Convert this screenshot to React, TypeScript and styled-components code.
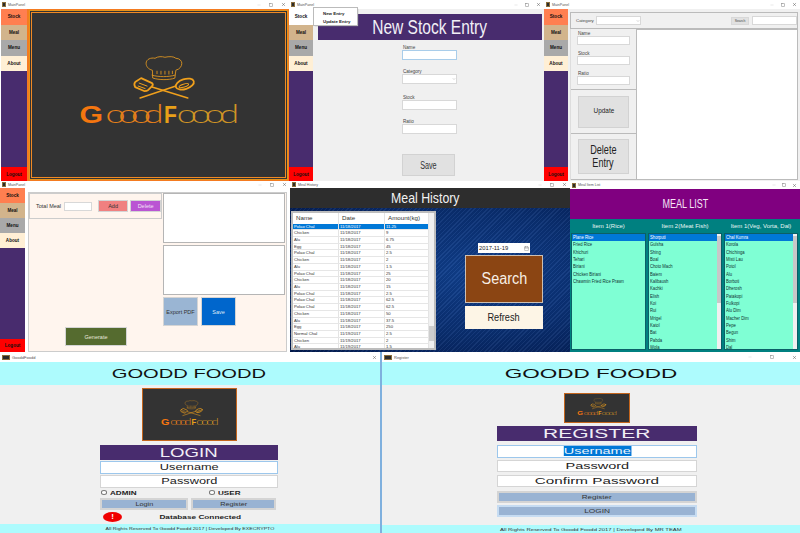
import React from 'react';
import styled, { createGlobalStyle } from 'styled-components';
import { Minus, Square, X, ChevronDown, Calendar } from 'lucide-react';

const Global = createGlobalStyle`
  html, body { margin: 0; padding: 0; background: #fff; overflow: hidden; }
  body { font-family: "Liberation Sans", Arial, sans-serif; color: #222; }
  * { box-sizing: border-box; }
`;

const Collage = styled.div`
  width: 800px; height: 533px; display: grid;
  grid-template-rows: 181px 171px 181px; overflow: hidden;
`;
const Row = styled.div`display: flex; min-width: 0;`;
const Win = styled.section<{ $w: number; $bg?: string; $edge?: string }>`
  width: ${p => p.$w}px; flex: none; height: 100%; display: flex; flex-direction: column;
  background: ${p => p.$bg || '#fff'}; overflow: hidden;
  ${p => p.$edge ? `border-right: 2px solid ${p.$edge};` : ''}
`;
const TitleBar = styled.header<{ $h?: number }>`
  height: ${p => p.$h || 9}px; flex: none; background: #fff; display: flex; align-items: center;
  padding: 0 3px 0 2px; gap: 2px; color: #555;
`;
const TitleIcon = styled.i<{ $w?: number }>`
  display: block; width: ${p => p.$w || 4}px; height: 5px; background: #2b2b2b; border: 1px solid #8a6d3b;
`;
const TitleText = styled.span<{ $s?: number }>`font-size: ${p => p.$s || 3.6}px; color: #555; flex: 1; white-space: nowrap;`;
const Controls = styled.div<{ $gap?: number }>`display: flex; gap: ${p => p.$gap || 8}px; align-items: center; color: #444;`;

function Title({ name, gap, h, iw, s, only }: { name: string; gap?: number; h?: number; iw?: number; s?: number; only?: boolean }) {
  return (
    <TitleBar $h={h}>
      <TitleIcon $w={iw} />
      <TitleText $s={s}>{name}</TitleText>
      <Controls $gap={gap}>
        {!only && <Minus size={4} color="#bbb" />}
        {!only && <Square size={4} />}
        <X size={5} />
      </Controls>
    </TitleBar>
  );
}

const Frame = styled.div`flex: 1; display: flex; min-height: 0;`;
const Side = styled.nav<{ $w: number; $pad?: number }>`
  width: ${p => p.$w}px; flex: none; display: flex; flex-direction: column;
  margin-left: ${p => p.$pad || 0}px;
`;
const NavItem = styled.div<{ $bg: string; $h: number }>`
  height: ${p => p.$h}px; flex: none; background: ${p => p.$bg}; display: flex; align-items: center; justify-content: center;
  font-size: 4.6px; font-weight: 700; color: #111;
`;
const NavFill = styled.div`flex: 1; background: #482c6e;`;

function Sidebar({ w, pad, stock = '#ff7f50', h = 15.5, logout = 14 }: { w: number; pad?: number; stock?: string; h?: number; logout?: number }) {
  return (
    <Side $w={w} $pad={pad}>
      <NavItem $bg={stock} $h={h}>Stock</NavItem>
      <NavItem $bg="#d2b48c" $h={h}>Meal</NavItem>
      <NavItem $bg="#a9a9a9" $h={h}>Menu</NavItem>
      <NavItem $bg="#ffefd5" $h={h}>About</NavItem>
      <NavFill />
      <NavItem $bg="#ff0000" $h={logout}>Logout</NavItem>
    </Side>
  );
}

/* logo */
const LogoSvg = styled.svg`display: block; width: 100%; height: 100%;`;
const ringFont = 'Lato, "Liberation Sans", sans-serif';
function Logo() {
  return (
    <LogoSvg viewBox="29 10 259 170" preserveAspectRatio="xMidYMid slice">
      <g fill="none" stroke="#dc9421" strokeWidth="0.9" strokeLinecap="round" strokeLinejoin="round">
        <path d="M152 70c-4-1-6-4-6-7 0-4 5-6 9-5 3-2 7-2 10-1 4-1 9-1 11 1 4 0 6 3 6 5 0 3-2 6-6 7l-1 8c-6 2-16 2-22 0z" />
        <path d="M152 75c6 2 17 2 23 0M157 71v2.5M161 71v3M165 71v3M169 71v3M172.500 71v2.500" />
      </g>
      <g stroke="#f0a01c" fill="none" strokeLinecap="round" strokeLinejoin="round">
        <path d="M140 98l36-12" strokeWidth="1.500" />
        <path d="M188 98l-36-11" strokeWidth="1.500" />
        <path d="M135 82l6-4 11 5c1 1 1 2 0 3l-4 4c-1 1-3 1-4 1l-9-4c-1-2-1-4 0-5z" strokeWidth="1.800" />
        <path d="M139 83l8 3M138 86l7 2.500" strokeWidth="1" />
        <ellipse cx="185" cy="84" rx="9.500" ry="5" transform="rotate(-18 185 84)" strokeWidth="1.800" />
        <ellipse cx="184" cy="85.500" rx="5" ry="1.500" transform="rotate(-18 184 85.500)" strokeWidth="1" />
      </g>
      <text transform="translate(79 123) scale(1.22 1)" fontFamily="Liberation Sans, sans-serif" fontSize="25" fontWeight="700" fill="#f5760f">G</text>
      <text transform="translate(105 123) scale(1.4 1)" fontFamily={ringFont} fontWeight="300" fontSize="26" fill="#e4801a" x="0 9.200 18.400 27.600">oood</text>
      <text transform="translate(164 123) scale(.85 1)" fontFamily="Liberation Sans, sans-serif" fontSize="25" fontWeight="700" fill="#e8a018">F</text>
      <text transform="translate(177 123) scale(1.4 1)" fontFamily={ringFont} fontWeight="300" fontSize="26" fill="#cf9425" x="0 10 20 30.500">oood</text>
    </LogoSvg>
  );
}

/* Window 1 */
const HomeStage = styled.div`flex: 1; display: flex; background: #f47b20; padding: 1px 1px 1px 2px; min-width: 0;`;
const HomePanel = styled.div`
  flex: 1; background: #333; border: 1px solid #e8941a; outline: 1px solid #f08a24; outline-offset: -3px; overflow: hidden;
`;

/* Window 2 */
const Workspace = styled.main<{ $bg?: string }>`flex: 1; min-width: 0; background: ${p => p.$bg || '#f0f0f0'}; position: relative; display: flex; flex-direction: column;`;
const Banner = styled.div`
  height: 26px; margin: 5px 2px 0 5px; background: #482c6e; color: #f2f0f6; display: flex; align-items: center; justify-content: center;
  font-size: 21px; flex: none;
`;
const Squeeze = styled.span<{ $x: number; $left?: boolean }>`
  display: inline-block; white-space: nowrap; transform: scaleX(${p => p.$x});
  ${p => p.$left ? 'transform-origin: left center;' : ''}
`;
const EntryForm = styled.form`width: 55px; margin: 5px 0 0 89px; display: flex; flex-direction: column;`;
const FieldLabel = styled.label`display: block; font-size: 4.600px; color: #444; height: 5px; line-height: 5px; margin-left: 1px;`;
const Box = styled.div<{ $h?: number; $focus?: boolean; $mb?: number; $w?: number; $ml?: number }>`
  height: ${p => p.$h || 10}px; ${p => p.$w ? `width: ${p.$w}px;` : ''} background: #fff; border: 1px solid ${p => p.$focus ? '#a9cdea' : '#d8d8d8'};
  margin-bottom: ${p => p.$mb || 0}px; margin-left: ${p => p.$ml || 0}px; display: flex; align-items: center; justify-content: flex-end; color: #888; flex: none;
`;
const SaveBtn = styled.button`
  width: 53px; height: 22px; margin-top: 20px; background: #e1e1e1; border: 1px solid #d2d2d2; font: 10px "Liberation Sans", sans-serif; color: #333; padding: 0;
`;
const Popup = styled.div`
  position: absolute; left: 1px; top: -1px; width: 43px; height: 17px; background: #fff; box-shadow: 0 0 0 1px #bbb, 1px 1px 1px #999;
  padding: 1px 0 0 9px; font-size: 4.4px; font-weight: 700; display: flex; flex-direction: column; justify-content: space-around; color: #222; z-index: 2;
`;

/* Window 3 */
const TopBar = styled.div`
  height: 17px; margin: 3px 2px 0 2px; border: 1px solid #bbb; display: flex; align-items: center; padding: 0 0 0 5px; flex: none; font-size: 4.4px; color: #444;
`;
const TopSpacer = styled.div`flex: 1;`;
const SmallBtn = styled.div`width: 18px; height: 8px; background: #e1e1e1; border: 1px solid #d8d8d8; font-size: 3.4px; display: flex; align-items: center; justify-content: center; margin-right: 3px;`;
const SplitArea = styled.div`flex: 1; display: flex; margin: 0 2px 1px 2px; min-height: 0;`;
const ToolColumn = styled.div`width: 66px; flex: none; display: flex; flex-direction: column; border-left: 1px solid #ddd;`;
const FieldsBlock = styled.div`height: 61px; padding: 2px 6px; flex: none; border-bottom: 1px solid #bbb;`;
const ActionBlock = styled.div<{ $h?: number }>`
  ${p => p.$h ? `height: ${p.$h}px; flex: none;` : 'flex: 1;'} display: flex; align-items: center; justify-content: center; border-bottom: 1px solid #bbb;
`;
const BigBtn = styled.button<{ $h: number; $s: number }>`
  width: 51px; height: ${p => p.$h}px; background: #e1e1e1; border: 1px solid #d2d2d2; font: ${p => p.$s}px/12.500px "Liberation Sans", sans-serif; color: #222; padding: 0;
`;
const GridPane = styled.div`flex: 1; background: #fff; border: 1px solid #bbb;`;
const CompactField = styled.div`margin-bottom: 6px;`;

/* Window 4 */
const MealPanel = styled.div`
  flex: 1; margin: 4px 3px 0 3px; background: #fff5ee; border: 1px solid #ccc; display: flex; min-width: 0;
`;
const MealLeft = styled.div`width: 133px; flex: none; display: flex; flex-direction: column;`;
const TotalBar = styled.div`
  height: 26px; border: 1px solid #ccc; display: flex; align-items: center; padding-left: 6px; font-size: 5.500px; color: #333; flex: none; white-space: nowrap;
`;
const ColorBtn = styled.button<{ $bg: string; $fg?: string; $w: number; $h: number; $ml?: number }>`
  width: ${p => p.$w}px; height: ${p => p.$h}px; background: ${p => p.$bg}; color: ${p => p.$fg || '#333'};
  margin-left: ${p => p.$ml || 0}px; border: 1px solid #d4d4d4; font: 5.500px "Liberation Sans", sans-serif; padding: 0; flex: none;
`;
const GenerateWrap = styled.div`margin: auto 0 5px 36px;`;
const MealRight = styled.div`flex: 1; display: flex; flex-direction: column; gap: 2px; padding-left: 1px; padding-right: 1px;`;
const ReportBox = styled.div`height: 50px; background: #fff; border: 1px solid #b5b5b5; flex: none;`;
const ExportRow = styled.div`display: flex; gap: 3px; padding-left: 0;`;

/* Window 5 */
const HistoryHead = styled.div`
  height: 20px; background: #2d2d2d; color: #f2f2f2; font-size: 14.500px; display: flex; align-items: center; justify-content: center; flex: none; padding-right: 10px;
`;
const HistoryBody = styled.div`
  flex: 1; display: flex; padding: 3px 0 2px 1px; min-height: 0;
  background:
    repeating-linear-gradient(-45deg, rgba(255,255,255,.05) 0 1px, rgba(0,0,0,.07) 1px 3px),
    radial-gradient(ellipse at 65% 45%, #10408f 0%, #0a2f72 55%, #021a4e 100%);
`;
const HistoryTable = styled.div`
  width: 145px; flex: none; background: #f3f3f3; border: 2px solid #bdbdbd; display: flex; overflow: hidden;
`;
const TableMain = styled.div`flex: 1; min-width: 0; background: #fff; overflow: hidden;`;
const TableTrack = styled.div`width: 5px; flex: none; background: linear-gradient(#f0f0f0 0 84%, #cdcdcd 84% 95%, #f0f0f0 95%);`;
const HRow = styled.div<{ $sel?: boolean; $head?: boolean }>`
  display: grid; grid-template-columns: 46px 46px 1fr;
  height: ${p => p.$head ? 10.500 : 6.720}px; line-height: ${p => p.$head ? 10.500 : 6.500}px;
  font-size: ${p => p.$head ? 6.200 : 4.200}px;
  color: ${p => p.$sel ? '#fff' : '#333'}; background: ${p => p.$sel ? '#0078d7' : '#fff'};
  ${p => p.$head ? '' : 'border-bottom: 1px solid #e6e6e6;'}
  white-space: nowrap;
`;
const HCell = styled.span<{ $head?: boolean }>`
  padding-left: ${p => p.$head ? 3 : 1}px; border-right: 1px solid #e4e4e4; overflow: hidden;
`;
const SearchColumn = styled.div`width: 78px; margin: 32px 0 0 29px; flex: none; display: flex; flex-direction: column; align-items: stretch;`;
const DateBox = styled.div`
  width: 52px; height: 10px; background: #fff; margin: 0 0 2px 13px; font-size: 5.800px; display: flex; align-items: center; justify-content: space-between; padding: 0 1px; color: #222;
`;
const SearchBtn = styled.button`
  height: 48px; background: #8b4513; color: #f8efe6; border: 1px solid #cdbfb2; font: 16px "Liberation Sans", sans-serif; padding: 0;
`;
const RefreshBtn = styled.button`
  height: 23px; margin-top: 3px; background: #fdf5e6; color: #222; border: none; font: 10px "Liberation Sans", sans-serif; padding: 0;
`;

/* Window 6 */
const ListHead = styled.div`
  height: 30px; background: #800080; color: #f6e6f6; font-size: 12px; display: flex; align-items: center; justify-content: center; flex: none;
`;
const ListBody = styled.div`
  flex: 1; background: #008080; display: grid; grid-template-columns: 75px 74px 74px; column-gap: 2px; padding: 0 0 2px 1px; grid-template-rows: 14px 1fr; min-height: 0;
`;
const ListTitle = styled.div`color: #e8f6f4; font-size: 6px; display: flex; align-items: center; justify-content: center; white-space: nowrap;`;
const ListBox = styled.div`background: #7fffd4; border: 1px solid #0b5f66; display: flex; overflow: hidden; min-height: 0;`;
const ListItems = styled.div`flex: 1; min-width: 0;`;
const ListItem = styled.div<{ $sel?: boolean }>`
  height: 7.330px; line-height: 7.330px; font-size: 5px; padding-left: 1px; white-space: nowrap;
  color: ${p => p.$sel ? '#fff' : '#133'}; background: ${p => p.$sel ? '#0078d7' : 'transparent'};
`;
const ListTrack = styled.div`width: 4px; flex: none; background: linear-gradient(#f0f0f0 0 2%, #c8c8c8 2% 60%, #f0f0f0 60%);`;

/* Window 7, 8 */
const CyanHead = styled.div<{ $pr?: number }>`
  height: 23px; background: #adfbfd; flex: none; display: flex; align-items: center; justify-content: center; font-size: 12.500px; color: #111;
  padding-right: ${p => p.$pr || 0}px;
`;
const AuthBody = styled.div<{ $pl: number; $w: number; $top: number }>`
  flex: 1; background: #f0f0f0; padding: ${p => p.$top}px 0 0 ${p => p.$pl}px; display: flex; flex-direction: column; min-height: 0;
  > * { width: ${p => p.$w}px; }
`;
const AuthLogoWrap = styled.div<{ $w: number; $h: number; $ml: number; $mb: number }>`
  && { width: ${p => p.$w}px; } height: ${p => p.$h}px; margin: 0 0 ${p => p.$mb}px ${p => p.$ml}px; border: 1px solid #c4651c; background: #333; overflow: hidden; flex: none;
`;
const AuthBar = styled.div`
  height: 15px; background: #482c6e; color: #f1eef6; font-size: 12px; display: flex; align-items: center; justify-content: center; flex: none;
`;
const AuthInput = styled.div<{ $focus?: boolean; $mt?: number }>`
  height: 12.500px; background: #fff; border: 1px solid ${p => p.$focus ? '#9cc7ec' : '#d5d5d5'}; margin-top: ${p => p.$mt || 0}px;
  font-size: 8.800px; display: flex; align-items: center; justify-content: center; color: #222; flex: none;
`;
const Selected = styled.span`background: #0078d7; color: #e8f2fb;`;
const RadioRow = styled.div`display: flex; height: 10px; align-items: center; font-size: 5.400px; font-weight: 700; color: #222; flex: none;`;
const RadioDot = styled.i`display: block; width: 6px; height: 4.500px; border: 1px solid #777; border-radius: 50%; background: #fff; margin: 0 3px 0 1px; flex: none;`;
const RadioItem = styled.div<{ $w: number }>`width: ${p => p.$w}px; display: flex; align-items: center; flex: none;`;
const AuthBtnRow = styled.div`display: flex; gap: 3px; flex: none;`;
const AuthBtn = styled.button<{ $mt?: number; $focus?: boolean; $w: number }>`
  height: 12px; width: ${p => p.$w}px; flex: none; margin-top: ${p => p.$mt || 0}px; background: #99b3d3; border: 2px solid ${p => p.$focus ? '#c6dcf2' : '#d4d4d4'};
  font: 5.200px "Liberation Sans", sans-serif; color: #333; padding: 0; overflow: hidden;
`;
const StatusRow = styled.div`display: flex; align-items: center; height: 11px; margin-top: 2px; flex: none;`;
const Alert = styled.div`
  width: 19px; height: 10px; border-radius: 50%; background: #f00000; color: #fff; font-size: 8px; font-weight: 700; line-height: 10px; text-align: center; margin-left: 3px; flex: none;
`;
const StatusText = styled.div`flex: 1; text-align: center; font-size: 5.500px; font-weight: 700; color: #222;`;
const CyanFoot = styled.footer<{ $h: number }>`
  height: ${p => p.$h}px; flex: none; background: #adfbfd; display: flex; align-items: center; justify-content: center; font-size: 4px; color: #333; white-space: nowrap;
`;

const rows: [string, string, string][] = [
  ['Polao Chal', '11/18/2017', '11.25'], ['Chicken', '11/18/2017', '9'], ['Alu', '11/18/2017', '6.75'], ['Egg', '11/18/2017', '45'],
  ['Polao Chal', '11/18/2017', '2.5'], ['Chicken', '11/18/2017', '2'], ['Alu', '11/18/2017', '1.5'], ['Polao Chal', '11/18/2017', '25'],
  ['Chicken', '11/18/2017', '20'], ['Alu', '11/18/2017', '15'], ['Polao Chal', '11/18/2017', '2.5'], ['Polao Chal', '11/18/2017', '62.5'],
  ['Polao Chal', '11/18/2017', '62.5'], ['Chicken', '11/18/2017', '50'], ['Alu', '11/18/2017', '37.5'], ['Egg', '11/18/2017', '250'],
  ['Normal Chal', '11/19/2017', '2.5'], ['Chicken', '11/19/2017', '2'], ['Alu', '11/19/2017', '1.5'],
];
const lists = [
  { title: 'Item 1(Rice)', bar: false, items: ['Plane Rice', 'Fried Rice', 'Khichuri', 'Tehari', 'Biriani', 'Chicken Biriani', 'Chawmin Fried Rice Prawn'] },
  { title: 'Item 2(Meat Fish)', bar: true, items: ['Shorputi', 'Gulsha', 'Shing', 'Boal', 'Choto Mach', 'Baiem', 'Kalibaush', 'Kachki', 'Elish', 'Koi', 'Rui', 'Mrigel', 'Katol', 'Bat', 'Pabda', 'Wola'] },
  { title: 'Item 1(Veg, Vorta, Dal)', bar: true, items: ['Chal Kumra', 'Korola', 'Chichinga', 'Misti Lau', 'Potol', 'Alu', 'Borboti', 'Dherosh', 'Patakopi', 'Fulkopi', 'Alu Dim', 'Macher Dim', 'Pepe', 'Begun', 'Shim', 'Dal'] },
];

export default function App() {
  return (
    <Collage>
      <Global />
      <Row>
        <Win $w={289}>
          <Title name="MainPanel" gap={8} />
          <Frame>
            <Sidebar w={26} pad={1} />
            <HomeStage>
              <HomePanel><Logo /></HomePanel>
            </HomeStage>
          </Frame>
        </Win>
        <Win $w={255}>
          <Title name="MainPanel" gap={7} />
          <Frame>
            <Sidebar w={24} stock="#ffffff" />
            <Workspace>
              <Popup><span>New Entry</span><span>Update Entry</span></Popup>
              <Banner><Squeeze $x={0.74}>New Stock Entry</Squeeze></Banner>
              <EntryForm>
                <FieldLabel>Name</FieldLabel>
                <Box $focus $mb={9} />
                <FieldLabel>Category</FieldLabel>
                <Box $mb={11}><ChevronDown size={4} /></Box>
                <FieldLabel>Stock</FieldLabel>
                <Box $mb={9} />
                <FieldLabel>Ratio</FieldLabel>
                <Box />
                <SaveBtn type="button"><Squeeze $x={0.72}>Save</Squeeze></SaveBtn>
              </EntryForm>
            </Workspace>
          </Frame>
        </Win>
        <Win $w={256}>
          <Title name="MainPanel" gap={7} />
          <Frame>
            <Sidebar w={24} />
            <Workspace>
              <TopBar>
                <span>Category</span>
                <Box $w={45} $h={9} $ml={2}><ChevronDown size={4} /></Box>
                <TopSpacer />
                <SmallBtn>Search</SmallBtn>
                <Box $w={45} $h={9} />
              </TopBar>
              <SplitArea>
                <ToolColumn>
                  <FieldsBlock>
                    <CompactField><FieldLabel>Name</FieldLabel><Box $h={9} $mb={0} /></CompactField>
                    <CompactField><FieldLabel>Stock</FieldLabel><Box $h={9} /></CompactField>
                    <CompactField><FieldLabel>Ratio</FieldLabel><Box $h={9} /></CompactField>
                  </FieldsBlock>
                  <ActionBlock $h={44}><BigBtn type="button" $h={32} $s={8}><Squeeze $x={0.8}>Update</Squeeze></BigBtn></ActionBlock>
                  <ActionBlock><BigBtn type="button" $h={35} $s={12}><Squeeze $x={0.76}>Delete</Squeeze><br /><Squeeze $x={0.76}>Entry</Squeeze></BigBtn></ActionBlock>
                </ToolColumn>
                <GridPane />
              </SplitArea>
            </Workspace>
          </Frame>
        </Win>
      </Row>

      <Row>
        <Win $w={290} $bg="#fff">
          <Title name="MainPanel" h={7} gap={8} />
          <Frame>
            <Sidebar w={25} h={15} logout={13} />
            <Workspace $bg="#fff">
              <MealPanel>
                <MealLeft>
                  <TotalBar>
                    <span>Total Meal</span>
                    <Box $w={28} $h={9} $ml={3} />
                    <ColorBtn type="button" $bg="#f08080" $w={30} $h={12} $ml={6}>Add</ColorBtn>
                    <ColorBtn type="button" $bg="#ba55d3" $fg="#f3e3f7" $w={31} $h={12} $ml={2}>Delete</ColorBtn>
                  </TotalBar>
                  <GenerateWrap>
                    <ColorBtn type="button" $bg="#556b2f" $fg="#e8e8dc" $w={62} $h={19}>Generate</ColorBtn>
                  </GenerateWrap>
                </MealLeft>
                <MealRight>
                  <ReportBox />
                  <ReportBox />
                  <ExportRow>
                    <ColorBtn type="button" $bg="#9ab5d3" $w={35} $h={29}>Export PDF</ColorBtn>
                    <ColorBtn type="button" $bg="#0066cc" $fg="#dfeaf6" $w={35} $h={29}>Save</ColorBtn>
                  </ExportRow>
                </MealRight>
              </MealPanel>
            </Workspace>
          </Frame>
        </Win>
        <Win $w={280} $bg="#2d2d2d">
          <Title name="Meal History" h={7} gap={8} />
          <HistoryHead><Squeeze $x={0.85}>Meal History</Squeeze></HistoryHead>
          <HistoryBody>
            <HistoryTable>
              <TableMain>
                <HRow $head><HCell $head>Name</HCell><HCell $head>Date</HCell><HCell $head>Amount(kg)</HCell></HRow>
                {rows.map((r, i) => (
                  <HRow key={i} $sel={i === 0}><HCell>{r[0]}</HCell><HCell>{r[1]}</HCell><HCell>{r[2]}</HCell></HRow>
                ))}
              </TableMain>
              <TableTrack />
            </HistoryTable>
            <SearchColumn>
              <DateBox><span>2017-11-19</span><Calendar size={5} color="#777" /></DateBox>
              <SearchBtn type="button"><Squeeze $x={0.9}>Search</Squeeze></SearchBtn>
              <RefreshBtn type="button"><Squeeze $x={0.92}>Refresh</Squeeze></RefreshBtn>
            </SearchColumn>
          </HistoryBody>
        </Win>
        <Win $w={230}>
          <Title name="Meal Item List" h={8} gap={6} />
          <ListHead><Squeeze $x={0.75}>MEAL LIST</Squeeze></ListHead>
          <ListBody>
            {lists.map(l => <ListTitle key={l.title}>{l.title}</ListTitle>)}
            {lists.map(l => (
              <ListBox key={l.title}>
                <ListItems>
                  {l.items.map((t, i) => <ListItem key={t} $sel={i === 0}><Squeeze $x={0.84} $left>{t}</Squeeze></ListItem>)}
                </ListItems>
                {l.bar && <ListTrack />}
              </ListBox>
            ))}
          </ListBody>
        </Win>
      </Row>

      <Row>
        <Win $w={382} $edge="#7fb0de">
          <Title name="GooddFoodd" h={10} iw={8} s={4} only />
          <CyanHead $pr={3}><Squeeze $x={1.61}>GOODD FOODD</Squeeze></CyanHead>
          <AuthBody $pl={100} $w={178} $top={3}>
            <AuthLogoWrap $w={95} $h={53} $ml={42} $mb={4}><Logo /></AuthLogoWrap>
            <AuthBar><Squeeze $x={1.55}>LOGIN</Squeeze></AuthBar>
            <AuthInput $focus $mt={1}><Squeeze $x={1.45}>Username</Squeeze></AuthInput>
            <AuthInput $mt={1.500}><Squeeze $x={1.45}>Password</Squeeze></AuthInput>
            <RadioRow>
              <RadioItem $w={108}><RadioDot /><Squeeze $x={1.5} $left>ADMIN</Squeeze></RadioItem>
              <RadioItem $w={60}><RadioDot /><Squeeze $x={1.5} $left>USER</Squeeze></RadioItem>
            </RadioRow>
            <AuthBtnRow>
              <AuthBtn type="button" $w={88}><Squeeze $x={1.4}>Login</Squeeze></AuthBtn>
              <AuthBtn type="button" $w={85}><Squeeze $x={1.4}>Register</Squeeze></AuthBtn>
            </AuthBtnRow>
            <StatusRow>
              <Alert>!</Alert>
              <StatusText><Squeeze $x={1.5}>Database Connected</Squeeze></StatusText>
            </StatusRow>
          </AuthBody>
          <CyanFoot $h={9}><Squeeze $x={1.3}>All Rights Reserved To Goodd Foodd 2017 | Developed By EXECRYPTO</Squeeze></CyanFoot>
        </Win>
        <Win $w={418}>
          <Title name="Register" h={10} iw={8} s={4} gap={18} />
          <CyanHead><Squeeze $x={1.8}>GOODD FOODD</Squeeze></CyanHead>
          <AuthBody $pl={115} $w={200} $top={8}>
            <AuthLogoWrap $w={66} $h={30} $ml={67} $mb={3}><Logo /></AuthLogoWrap>
            <AuthBar><Squeeze $x={1.75}>REGISTER</Squeeze></AuthBar>
            <AuthInput $focus $mt={4}><Squeeze $x={1.65}><Selected>Username</Selected></Squeeze></AuthInput>
            <AuthInput $mt={2}><Squeeze $x={1.65}>Password</Squeeze></AuthInput>
            <AuthInput $mt={2.500}><Squeeze $x={1.73}>Confirm Password</Squeeze></AuthInput>
            <AuthBtn type="button" $w={200} $mt={3.500}><Squeeze $x={1.55}>Register</Squeeze></AuthBtn>
            <AuthBtn type="button" $w={200} $mt={2} $focus><Squeeze $x={1.6}>LOGIN</Squeeze></AuthBtn>
          </AuthBody>
          <CyanFoot $h={8}><Squeeze $x={1.47}>All Rights Reserved To Goodd Foodd 2017 | Developed By MR TEAM</Squeeze></CyanFoot>
        </Win>
      </Row>
    </Collage>
  );
}
